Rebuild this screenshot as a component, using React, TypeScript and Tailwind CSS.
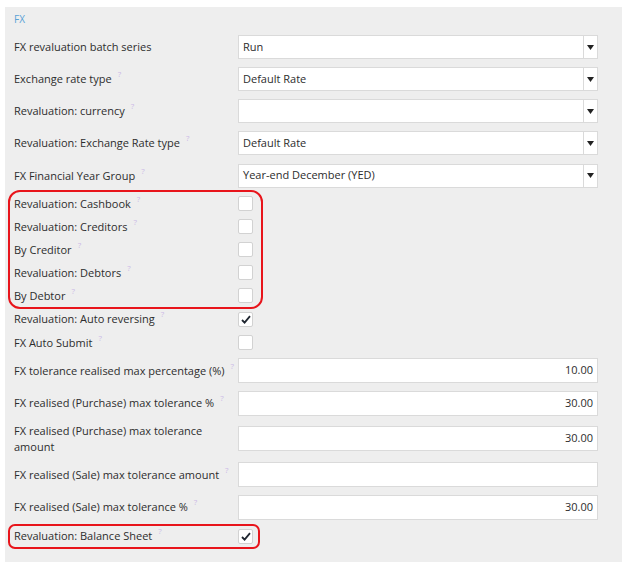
import React from "react";

type Row =
  | { kind: "select"; label: string; value: string; help?: boolean; h: string }
  | { kind: "check"; label: string; checked?: boolean; h: string }
  | { kind: "number"; label: string; value: string; h: string; help?: boolean };

const font = { fontFamily: '"Open Sans", "Liberation Sans", sans-serif' };

function Help() {
  return <sup className="ml-[6px] text-[8px] text-[#cbb9e6] align-[2px]">?</sup>;
}

function SelectBox({ value }: { value: string }) {
  return (
    <div className="flex h-[24px] flex-1 items-stretch border border-[#dadada] bg-white">
      <div className="flex flex-1 items-center px-[4px] text-[11px] text-[#2d2d2d]">{value}</div>
      <div className="flex w-[14px] items-center justify-center border-l border-[#dadada]">
        <svg width="7" height="5" viewBox="0 0 7 5">
          <path d="M0 0 H7 L3.5 5 Z" fill="#222" />
        </svg>
      </div>
    </div>
  );
}

function NumberBox({ value }: { value: string }) {
  return (
    <div className="flex h-[25px] flex-1 items-center justify-end border border-[#dadada] bg-white px-[4px] text-[11px] text-[#2d2d2d]">
      {value}
    </div>
  );
}

function CheckBox({ checked }: { checked?: boolean }) {
  return (
    <div className="flex h-[15px] w-[15px] items-center justify-center rounded-[2px] border border-[#d2d2d2] bg-white">
      {checked && (
        <svg width="10" height="9" viewBox="0 0 10 9">
          <path d="M1 5 L3.6 7.6 L9 1.2" fill="none" stroke="#1f2630" strokeWidth="1.8" />
        </svg>
      )}
    </div>
  );
}

const rows: Row[] = [
  { kind: "select", label: "FX revaluation batch series", value: "Run", h: "h-[32px]" },
  { kind: "select", label: "Exchange rate type", value: "Default Rate", help: true, h: "h-[32px]" },
  { kind: "select", label: "Revaluation: currency", value: "", help: true, h: "h-[32px]" },
  { kind: "select", label: "Revaluation: Exchange Rate type", value: "Default Rate", help: true, h: "h-[32px]" },
  { kind: "select", label: "FX Financial Year Group", value: "Year-end December (YED)", help: true, h: "h-[33px]" },
];

const checks1: Row[] = [
  { kind: "check", label: "Revaluation: Cashbook", h: "h-[23px]" },
  { kind: "check", label: "Revaluation: Creditors", h: "h-[23px]" },
  { kind: "check", label: "By Creditor", h: "h-[23px]" },
  { kind: "check", label: "Revaluation: Debtors", h: "h-[23px]" },
  { kind: "check", label: "By Debtor", h: "h-[23px]" },
];

const rest: Row[] = [
  { kind: "check", label: "Revaluation: Auto reversing", checked: true, h: "h-[24px]" },
  { kind: "check", label: "FX Auto Submit", h: "h-[23px]" },
  { kind: "number", label: "FX tolerance realised max percentage (%)", value: "10.00", help: true, h: "h-[33px]" },
  { kind: "number", label: "FX realised (Purchase) max tolerance %", value: "30.00", help: true, h: "h-[32px]" },
  { kind: "number", label: "FX realised (Purchase) max tolerance amount", value: "30.00", h: "h-[39px]" },
  { kind: "number", label: "FX realised (Sale) max tolerance amount", value: "", help: true, h: "h-[33px]" },
  { kind: "number", label: "FX realised (Sale) max tolerance %", value: "30.00", help: true, h: "h-[32px]" },
];

function FieldRow({ row }: { row: Row }) {
  const help = row.kind === "check" ? true : row.help;
  return (
    <div className={`flex items-center ${row.h}`}>
      <div className="w-[224px] pr-[4px] text-[11px] leading-[16px] text-[#2d2d2d]">
        {row.label}
        {help && <Help />}
      </div>
      {row.kind === "select" && <SelectBox value={row.value} />}
      {row.kind === "number" && <NumberBox value={row.value} />}
      {row.kind === "check" && <CheckBox checked={row.checked} />}
    </div>
  );
}

export default function App() {
  return (
    <div className="h-[562px] w-[622px] bg-white pl-[5px] pt-[7px]" style={font}>
      <div className="h-[555px] bg-[#eeeeee] pl-[9px] pr-[24px]">
        <div className="flex h-[24px] items-center text-[10px] text-[#5aa2d6]">FX</div>
        {rows.map((r) => (
          <FieldRow key={r.label} row={r} />
        ))}
        <div className="-mx-[6px] -my-[2px] w-[255px] rounded-[12px] border-2 border-[#e8141b] px-[4px]">
          {checks1.map((r) => (
            <FieldRow key={r.label} row={r} />
          ))}
        </div>
        {rest.map((r) => (
          <FieldRow key={r.label} row={r} />
        ))}
        <div className="-ml-[6px] mt-[1px] flex h-[25px] w-[252px] items-center rounded-[7px] border-2 border-[#e8141b] pl-[4px]">
          <div className="w-[224px] text-[11px] text-[#2d2d2d]">
            Revaluation: Balance Sheet
            <Help />
          </div>
          <CheckBox checked />
        </div>
      </div>
    </div>
  );
}
